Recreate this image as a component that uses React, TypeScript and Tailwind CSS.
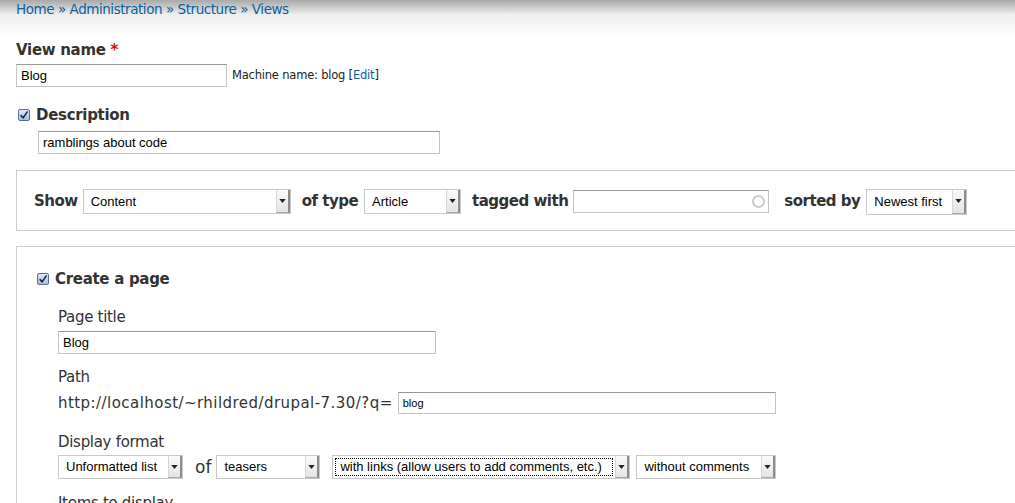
import React from "react";

const label = "font-['DejaVu_Sans',Verdana,sans-serif]";
const field = "font-['Liberation_Sans',Arial,sans-serif]";

function Checkbox() {
  return (
    <span className="inline-flex h-[12px] w-[12px] items-center justify-center rounded-[2px] border border-[#5b6f99] bg-gradient-to-b from-[#dfe8f7] to-[#a9bde3]">
      <svg viewBox="0 0 12 12" className="h-[11px] w-[11px]">
        <path d="M2.5 6.2 L5 8.8 L9.8 1.8" fill="none" stroke="#1b2a4a" strokeWidth="1.9" strokeLinecap="round" strokeLinejoin="round" />
      </svg>
    </span>
  );
}

function TextInput({ value, className, textClass = "text-[13px]" }: { value?: string; className: string; textClass?: string }) {
  return (
    <div className={`flex items-center border border-[#c4c4c4] border-t-[#999] bg-white px-[4px] ${field} ${textClass} text-black ${className}`}>
      {value}
    </div>
  );
}

function Select({ value, className, focused }: { value: string; className: string; focused?: boolean }) {
  return (
    <div className={`flex items-stretch border border-[#c8c8c8] bg-white ${field} text-[13px] text-black ${className}`}>
      <div className="flex min-w-0 flex-1 items-center p-[2px]">
        <span className={`flex h-full flex-1 items-center whitespace-nowrap px-[5px] ${focused ? "outline outline-1 outline-dotted outline-black -outline-offset-1" : ""}`}>
          {value}
        </span>
      </div>
      <div className="flex w-[14px] items-center justify-center border-l border-[#d6d6d6] border-r-2 border-r-[#8d8d8d] border-b border-b-[#a8a8a8] bg-gradient-to-b from-[#fafafa] to-[#e4e4e4]">
        <svg viewBox="0 0 8 5" className="h-[4px] w-[7px]">
          <path d="M0 0 H8 L4 5 Z" fill="#222" />
        </svg>
      </div>
    </div>
  );
}

export default function App() {
  return (
    <div className={`min-h-screen overflow-hidden bg-white text-[#333] ${label}`}>
      <div className="h-[36px] bg-gradient-to-b from-[#a9a9a9] via-[#eeeeee] via-40% to-white px-4 pt-[1px]">
        <div className="text-[13.5px] leading-[17px] tracking-[-0.45px] text-[#0a5fa0]">
          <span>Home</span> » <span>Administration</span> » <span>Structure</span> » <span>Views</span>
        </div>
      </div>

      <div className="px-4">
        <div className="mt-[4px] text-[15px] font-bold leading-[20px] tracking-[-0.3px]">
          View name <span className="text-[#e00]">*</span>
        </div>
        <div className="mt-[4px] flex items-center gap-[5px]">
          <TextInput value="Blog" className="h-[23px] w-[211px]" />
          <span className="text-[11.5px] tracking-[-0.2px] text-[#222]">
            Machine name: blog [<span className="text-[#0a5fa0]">Edit</span>]
          </span>
        </div>

        <div className="mt-[18px] flex items-center gap-[6px] pl-[2px]">
          <Checkbox />
          <span className="text-[15px] font-bold leading-[20px] tracking-[-0.3px]">Description</span>
        </div>
        <div className="mt-[6px] pl-[22px]">
          <TextInput value="ramblings about code" className="h-[23px] w-[402px]" />
        </div>

        <div className="mt-[16px] flex h-[61px] w-[1100px] items-center border border-[#cccccc] pl-[17px] pt-[2px]">
          <span className="text-[15px] font-bold tracking-[-0.5px]">Show</span>
          <Select value="Content" className="ml-[5px] h-[25px] w-[208px]" />
          <span className="ml-[11px] text-[15px] font-bold tracking-[-0.5px]">of type</span>
          <Select value="Article" className="ml-[6px] h-[25px] w-[97px]" />
          <span className="ml-[11px] text-[15px] font-bold tracking-[-0.5px]">tagged with</span>
          <div className="relative ml-[5px]">
            <TextInput className="h-[23px] w-[196px]" />
            <span className="absolute right-[4px] top-[5px] h-[13px] w-[13px] rounded-full border-2 border-[#c9c9c9]" />
          </div>
          <span className="ml-[15px] text-[15px] font-bold tracking-[-0.5px]">sorted by</span>
          <Select value="Newest first" className="ml-[6px] h-[26px] w-[101px]" />
        </div>

        <div className="mt-[15px] w-[1100px] border border-b-0 border-[#cccccc] pl-[20px] pt-[22px] pb-[20px]">
          <div className="flex items-center gap-[6px]">
            <Checkbox />
            <span className="text-[15px] font-bold leading-[20px] tracking-[-0.3px]">Create a page</span>
          </div>

          <div className="pl-[21px]">
            <div className="mt-[18px] text-[15px] leading-[20px] tracking-[-0.3px]">Page title</div>
            <TextInput value="Blog" className="mt-[4px] h-[23px] w-[378px]" />

            <div className="mt-[13px] text-[15px] leading-[20px] tracking-[-0.3px]">Path</div>
            <div className="mt-[5px] flex items-center gap-[5px]">
              <span className="text-[15px] leading-[20px] tracking-[0.45px]">http://localhost/~rhildred/drupal-7.30/?q=</span>
              <TextInput value="blog" className="h-[22px] w-[378px]" textClass="text-[11px]" />
            </div>

            <div className="mt-[18px] text-[15px] leading-[20px] tracking-[-0.3px]">Display format</div>
            <div className="mt-[3px] flex items-center">
              <Select value="Unformatted list" className="h-[24px] w-[125px]" />
              <span className="ml-[12px] text-[17px] leading-[20px]">of</span>
              <Select value="teasers" className="ml-[5px] h-[24px] w-[104px]" />
              <Select value="with links (allow users to add comments, etc.)" className="ml-[12px] h-[24px] w-[298px]" focused />
              <Select value="without comments" className="ml-[6px] h-[24px] w-[140px]" />
            </div>

            <div className="mt-[14px] text-[15px] leading-[20px] tracking-[-0.3px]">Items to display</div>
          </div>
        </div>
      </div>
    </div>
  );
}
